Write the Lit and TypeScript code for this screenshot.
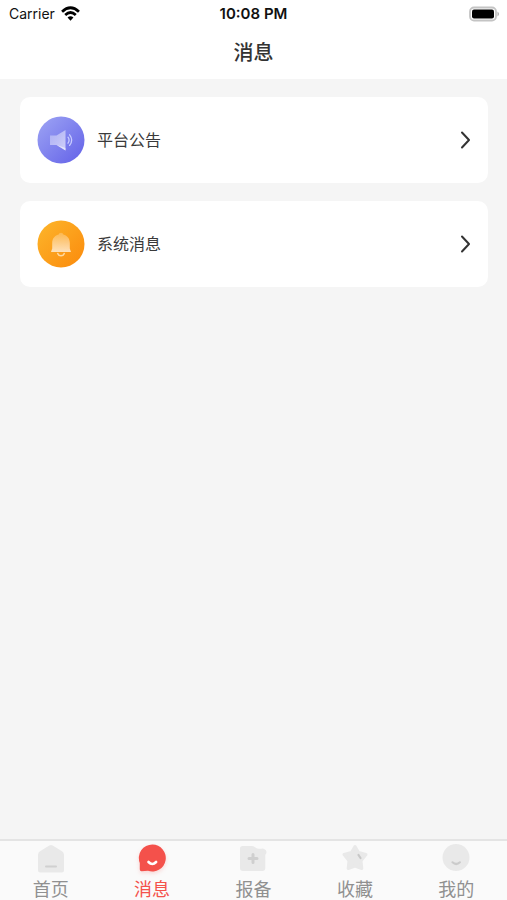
import { LitElement, html, css, svg } from "lit";
import { customElement, property, state } from "lit/decorators.js";
import { classMap } from "lit/directives/class-map.js";

const icons = {
  announcement: svg`
    <defs>
      <linearGradient id="violet" x1="0" y1="0" x2="1" y2="1">
        <stop offset="0" stop-color="#9ea5f4" /><stop offset="1" stop-color="#6260e8" />
      </linearGradient>
      <linearGradient id="horn" x1="0" y1="0" x2="1" y2="1">
        <stop offset="0" stop-color="#fff" stop-opacity=".3" /><stop offset="1" stop-color="#fff" stop-opacity=".65" />
      </linearGradient>
    </defs>
    <circle cx="24" cy="24" r="23.5" fill="url(#violet)" />
    <path d="M13 19.5h6.5L28.5 14v20.5L19.5 29H13z" fill="url(#horn)" />
    <path d="M19.5 29l9 5.5V32z" fill="#fff" fill-opacity=".5" />
    <path d="M31 21.2q2.2 3 0 6M32.6 18.8q4.2 5.2 0 10.6" fill="none" stroke="#c9ccff" stroke-width="1.3" stroke-linecap="round" />`,
  system: svg`
    <defs>
      <linearGradient id="amber" x1="0" y1="0" x2="1" y2="1">
        <stop offset="0" stop-color="#fdb62b" /><stop offset="1" stop-color="#fb8a0c" />
      </linearGradient>
      <linearGradient id="bell" x1="0" y1="0" x2="0" y2="1">
        <stop offset="0" stop-color="#fff" stop-opacity=".22" /><stop offset="1" stop-color="#fff" stop-opacity=".7" />
      </linearGradient>
    </defs>
    <circle cx="24" cy="24" r="23.5" fill="url(#amber)" />
    <path d="M24 12.8c1.3 0 2 .7 2.3 1.7 4.500 1.200 6.500 4.500 6.500 8.500v5.500l1.200 3.500H14l1.200-3.500V23c0-4 2-7.300 6.500-8.500.3-1 1-1.700 2.300-1.700z" fill="url(#bell)" />
    <path d="M20.500 32.800q.7 3 3.500 3t3.500-3" fill="none" stroke="#ffd9a0" stroke-width="1.400" />`,
  home: svg`
    <path d="M12.300 1.600q1.700-1 3.400 0l9.300 5.600q2 1.200 2 3.500V26q0 2.500-2.500 2.500H3.500Q1 28.500 1 26V10.700q0-2.300 2-3.500z" fill="#e9e9e9" />
    <path d="M9 22.500h10" stroke="#d0d0d0" stroke-width="2" stroke-linecap="round" />`,
  message: svg`
    <path d="M14.500 .500a13.500 13.500 0 1 1-4.500 26.300L3.500 27.200q-1.700 0-1.700-1.700V19A13.500 13.500 0 0 1 14.500 .500z" fill="#f4514b" />
    <path d="M10.500 18q3.800 4 7.600 0" fill="none" stroke="#fff" stroke-width="2.600" stroke-linecap="round" />`,
  report: svg`
    <path d="M3.500 2h9q2 0 3.500 1.300t3.500 1.400h3q1.300-.7 2.700.2 2.400 1.200 2.300 3.200 0 1.600-1.200 2.600V24q0 3-3 3H4q-3 0-3-3V4.500Q1 2 3.500 2z" fill="#e9e9e9" />
    <path d="M14 10.500v8M10 14.500h8" stroke="#cfcfcf" stroke-width="3" stroke-linecap="round" />`,
  favorite: svg`
    <path d="M14 2.500l3.500 6 7.500 2-5 6.200.8 7.800-6.800-2.500-6.800 2.500.8-7.800-5-6.200 7.500-2z" fill="#e9e9e9" stroke="#e9e9e9" stroke-width="3" stroke-linejoin="round" />
    <path d="M17.500 11l2 3" stroke="#c8c8c8" stroke-width="2.200" stroke-linecap="round" />`,
  profile: svg`
    <circle cx="14" cy="13.500" r="13.500" fill="#e9e9e9" />
    <path d="M10.500 18.300q3.700 3.400 7.400 0" fill="none" stroke="#cbcbcb" stroke-width="2.200" stroke-linecap="round" />`,
};

type IconName = keyof typeof icons;

@customElement("status-bar")
export class StatusBar extends LitElement {
  static styles = css`
    :host {
      display: grid;
      grid-template-columns: 1fr auto 1fr;
      align-items: center;
      height: 27px;
      padding: 0 7px;
      font-size: 14px;
      line-height: 20px;
      color: #111;
    }
    .carrier { display: flex; align-items: center; gap: 6px; padding-left: 2px; }
    .time { font-size: 15px; font-weight: 600; }
    .battery { justify-self: end; }
    svg { display: block; }
  `;
  render() {
    return html`
      <div class="carrier">
        <span>Carrier</span>
        <svg width="19" height="15" viewBox="0 0 18 14" aria-hidden="true">
          <g fill="none" stroke="#000" stroke-width="2.6">
            <path d="M1 5.3q8-7.400 16 0" />
            <path d="M4 8.400q5-4.600 10 0" />
          </g>
          <path d="M9 13.800L6.200 10.900q2.800-2.400 5.600 0z" />
        </svg>
      </div>
      <span class="time">10:08 PM</span>
      <svg class="battery" width="31" height="16" viewBox="0 0 31 16" role="img" aria-label="电量">
        <rect x="1" y="1.500" width="26" height="13" rx="4" fill="#fff" stroke="#c4c4c4" stroke-width="1.800" />
        <rect x="3" y="3.500" width="22" height="9" rx="2" />
        <path d="M28.500 5.500q3 2.500 0 5z" fill="#aaa" />
      </svg>
    `;
  }
}

@customElement("message-row")
export class MessageRow extends LitElement {
  @property() label = "";
  @property() icon: IconName = "system";
  static styles = css`
    .row {
      box-sizing: border-box;
      display: flex;
      align-items: center;
      gap: 12px;
      width: 100%;
      padding: 19px 17px;
      border: 0;
      border-radius: 10px;
      background: #fff;
      color: #3a3a3a;
      font: inherit;
      font-size: 16px;
      line-height: 24px;
      text-align: left;
      cursor: pointer;
    }
    .label { flex: 1; }
    svg { display: block; flex: none; }
  `;
  render() {
    return html`
      <button class="row" type="button">
        <svg width="48" height="48" viewBox="0 0 48 48" aria-hidden="true">${icons[this.icon]}</svg>
        <span class="label">${this.label}</span>
        <svg width="12" height="18" viewBox="0 0 12 18" aria-hidden="true">
          <path d="M3 1.500L10 9L3 16.500" fill="none" stroke="#333" stroke-width="2" stroke-linecap="round" stroke-linejoin="round" />
        </svg>
      </button>
    `;
  }
}

@customElement("tab-bar")
export class TabBar extends LitElement {
  @state() private active: IconName = "message";
  private tabs: { icon: IconName; label: string }[] = [
    { icon: "home", label: "首页" },
    { icon: "message", label: "消息" },
    { icon: "report", label: "报备" },
    { icon: "favorite", label: "收藏" },
    { icon: "profile", label: "我的" },
  ];
  static styles = css`
    .tabs {
      display: grid;
      grid-template-columns: repeat(5, 1fr);
      border-top: 2px solid #e4e4e4;
      background: #fafafa;
    }
    .tab {
      display: flex;
      flex-direction: column;
      align-items: center;
      gap: 8px;
      padding: 3px 0 0;
      border: 0;
      background: none;
      color: #909090;
      font: inherit;
      font-size: 18px;
      line-height: 20px;
      cursor: pointer;
    }
    .active { color: #f4514b; }
    svg { display: block; overflow: visible; }
    .active svg { filter: drop-shadow(0 2px 2px #f4514b33); }
  `;
  render() {
    return html`
      <nav class="tabs">
        ${this.tabs.map(
          (t) => html`
            <button
              type="button"
              class=${classMap({ tab: true, active: t.icon === this.active })}
              @click=${() => (this.active = t.icon)}
            >
              <svg width="28" height="28" viewBox="0 0 28 28" aria-hidden="true">${icons[t.icon]}</svg>
              <span>${t.label}</span>
            </button>
          `
        )}
      </nav>
    `;
  }
}

@customElement("app-root")
export class AppRoot extends LitElement {
  static styles = css`
    :host {
      display: flex;
      flex-direction: column;
      min-height: 100vh;
      background: #f5f5f5;
      font-family: Inter, "Noto Sans CJK SC", sans-serif;
    }
    .header { background: #fff; }
    .title {
      margin: 0;
      padding: 10px 0;
      font-size: 20px;
      line-height: 32px;
      font-weight: 500;
      color: #333;
      text-align: center;
    }
    .list {
      flex: 1;
      display: flex;
      flex-direction: column;
      gap: 18px;
      padding: 18px 19px 18px 20px;
    }
  `;
  render() {
    return html`
      <header class="header">
        <status-bar></status-bar>
        <h1 class="title">消息</h1>
      </header>
      <main class="list">
        <message-row icon="announcement" label="平台公告"></message-row>
        <message-row icon="system" label="系统消息"></message-row>
      </main>
      <tab-bar></tab-bar>
    `;
  }
}
